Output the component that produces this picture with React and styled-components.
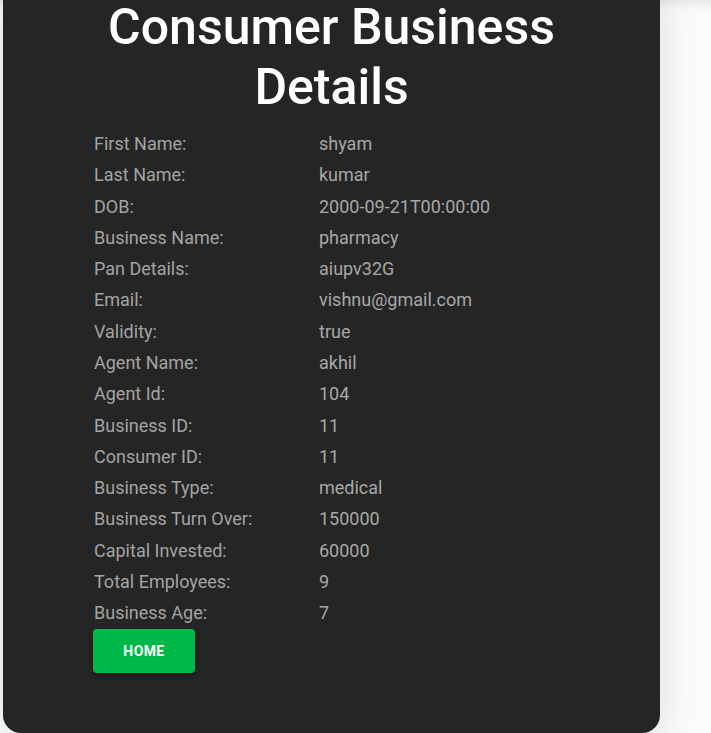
import React from "react";
import styled, { createGlobalStyle } from "styled-components";

const GlobalStyle = createGlobalStyle`
  body {
    margin: 0;
    background: #fbfbfb;
    font-family: Roboto, "Liberation Sans", sans-serif;
  }
`;

const Page = styled.div`
  min-height: 733px;
  padding-left: 3px;
  box-shadow: inset 0 12px 12px -10px rgba(0, 0, 0, 0.12);
  overflow: hidden;
`;

const Card = styled.div`
  width: 657px;
  box-sizing: border-box;
  margin-top: -20px;
  padding: 17px 0 60px 91px;
  background: #252525;
  border-radius: 18px;
  box-shadow: 0 6px 40px rgba(0, 0, 0, 0.13);
`;

const Title = styled.h1`
  margin: 0 0 11px -91px;
  font-size: 50px;
  line-height: 60px;
  font-weight: 500;
  color: #ffffff;
  text-align: center;
`;

const Details = styled.div`
  display: grid;
  grid-template-columns: 225px 1fr;
  grid-auto-rows: 31.27px;
  align-items: center;
`;

const Label = styled.div`
  font-size: 18px;
  color: #a4a4a4;
`;

const Value = styled(Label)`
  color: #a8a8a8;
`;

const HomeButton = styled.button`
  width: 102px;
  height: 44px;
  margin-left: -1px;
  margin-top: 1px;
  border: none;
  border-radius: 4px;
  background: #00b74a;
  color: #ffffff;
  font-family: Roboto, "Liberation Sans", sans-serif;
  font-size: 14px;
  font-weight: 700;
  letter-spacing: 0.4px;
  text-transform: uppercase;
  box-shadow: 0 2px 5px rgba(0, 0, 0, 0.3);
  cursor: pointer;
`;

const rows = [
  ["First Name:", "shyam"],
  ["Last Name:", "kumar"],
  ["DOB:", "2000-09-21T00:00:00"],
  ["Business Name:", "pharmacy"],
  ["Pan Details:", "aiupv32G"],
  ["Email:", "vishnu@gmail.com"],
  ["Validity:", "true"],
  ["Agent Name:", "akhil"],
  ["Agent Id:", "104"],
  ["Business ID:", "11"],
  ["Consumer ID:", "11"],
  ["Business Type:", "medical"],
  ["Business Turn Over:", "150000"],
  ["Capital Invested:", "60000"],
  ["Total Employees:", "9"],
  ["Business Age:", "7"],
];

const App = () => {
  return (
    <Page>
      <GlobalStyle />
      <Card>
        <Title>
          Consumer Business
          <br />
          Details
        </Title>
        <Details>
          {rows.map(([label, value]) => (
            <React.Fragment key={label}>
              <Label>{label}</Label>
              <Value>{value}</Value>
            </React.Fragment>
          ))}
        </Details>
        <HomeButton>Home</HomeButton>
      </Card>
    </Page>
  );
};

export default App;
